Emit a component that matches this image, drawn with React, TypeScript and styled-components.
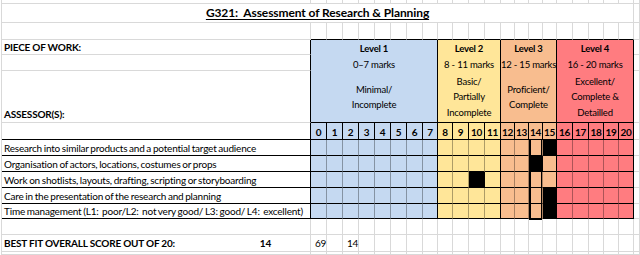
import React from "react";
import styled, { createGlobalStyle, css } from "styled-components";

const GRID = "#d9d9d9";
const INK = "#000000";
const INNER = "rgba(0, 0, 0, 0.32)";

const WIDTHS = [16, 16, 16, 16, 16, 16, 16, 15, 15, 16, 16, 16, 14, 14, 14, 14, 16, 16, 15, 15, 15];
const HEIGHTS = [4, 19, 17, 15, 16, 52, 17, 16, 16, 16, 16, 15, 16, 17];

interface Level {
  name: string;
  marks: string;
  desc: string[];
  from: number;
  to: number;
  bg: string;
}

const LEVELS: Level[] = [
  { name: "Level 1", marks: "0–7 marks", desc: ["Minimal/", "Incomplete"], from: 0, to: 7, bg: "#c5d9f1" },
  { name: "Level 2", marks: "8 - 11 marks", desc: ["Basic/", "Partially", "Incomplete"], from: 8, to: 11, bg: "#ffe699" },
  { name: "Level 3", marks: "12 - 15 marks", desc: ["Proficient/", "Complete"], from: 12, to: 15, bg: "#f8bd8f" },
  { name: "Level 4", marks: "16 - 20 marks", desc: ["Excellent/", "Complete &", "Detailled"], from: 16, to: 20, bg: "#ff7c80" },
];

const CRITERIA = [
  { text: "Research into similar products and a potential target audience", filled: [15] },
  { text: "Organisation of actors, locations, costumes or props", filled: [14] },
  { text: "Work on shotlists, layouts, drafting, scripting or storyboarding", filled: [10] },
  { text: "Care in the presentation of the research and planning", filled: [15] },
  { text: "Time management (L1:  poor/L2:  not very good/ L3: good/ L4:  excellent)", filled: [15] },
];

const MARKS = Array.from({ length: 21 }, (_, i) => i);
const levelOf = (n: number) => LEVELS.find((l) => n >= l.from && n <= l.to)!;
const isLevelEnd = (n: number) => LEVELS.some((l) => l.to === n);
const colOf = (n: number) => n + 2;
const REST = 23;

const GlobalStyle = createGlobalStyle`
  html, body {
    margin: 0;
    padding: 0;
    background: #ffffff;
  }
  body {
    font-family: Lato, "Liberation Sans", sans-serif;
    color: #000;
  }
`;

const Sheet = styled.div`
  display: grid;
  grid-template-columns: 309px ${WIDTHS.map((w) => `${w}px`).join(" ")} 1fr;
  grid-template-rows: ${HEIGHTS.map((h) => `${h}px`).join(" ")} 1fr;
  width: 639px;
  height: 255px;
  margin-left: 1px;
  border-left: 1px solid ${GRID};
  overflow: hidden;
  box-sizing: border-box;
`;

interface CellProps {
  $col: string | number;
  $row: string | number;
  $bg?: string;
  $right?: string;
  $bottom?: string;
}

const Cell = styled.div<CellProps>`
  grid-column: ${(p) => p.$col};
  grid-row: ${(p) => p.$row};
  background: ${(p) => p.$bg ?? "transparent"};
  border-right: 1px solid ${(p) => p.$right ?? GRID};
  border-bottom: 1px solid ${(p) => p.$bottom ?? GRID};
  box-sizing: border-box;
  min-width: 0;
  min-height: 0;
  font-size: 10px;
  letter-spacing: -0.2px;
  line-height: 1;
  white-space: pre;
`;

const TitleCell = styled(Cell)`
  display: flex;
  align-items: center;
  justify-content: center;
  font-size: 12px;
  font-weight: 700;
  letter-spacing: -0.1px;
  text-decoration: underline;
  text-underline-offset: 2px;
`;

const LabelCell = styled(Cell)<{ $align?: "center" | "end" }>`
  display: flex;
  align-items: ${(p) => (p.$align === "end" ? "flex-end" : "center")};
  padding: 0 0 ${(p) => (p.$align === "end" ? "3px" : "0")} 2px;
  font-weight: 700;
`;

const HeaderCell = styled(Cell)`
  display: flex;
  flex-direction: column;
  align-items: center;
  font-size: 9.5px;
`;

const HeaderTop = styled.div`
  height: 31px;
  display: flex;
  flex-direction: column;
  justify-content: center;
  align-items: center;
  gap: 7px;
  padding-top: 1px;
`;

const LevelName = styled.div`
  font-weight: 700;
`;

const HeaderDesc = styled.div`
  flex: 1;
  display: flex;
  flex-direction: column;
  justify-content: center;
  align-items: center;
  gap: 6px;
`;

const NumCell = styled(Cell)`
  display: flex;
  align-items: center;
  justify-content: center;
  font-weight: 700;
  padding-top: 1px;
`;

const MarkCell = styled(Cell)<{ $filled?: boolean; $outlined?: boolean; $last?: boolean }>`
  ${(p) =>
    p.$filled &&
    css`
      background: ${INK};
    `}
  ${(p) =>
    p.$outlined &&
    css`
      box-shadow: inset 2px 0 0 ${INK}, inset -1px 0 0 ${INK};
    `}
  ${(p) =>
    p.$outlined &&
    p.$last &&
    css`
      border-bottom-width: 2px;
      margin-bottom: -1px;
    `}
`;

const CriterionCell = styled(Cell)`
  display: flex;
  align-items: center;
  padding-left: 2px;
  word-spacing: -0.6px;
`;

const ScoreCell = styled(Cell)`
  display: flex;
  align-items: center;
  justify-content: space-between;
  padding: 0 39px 0 2px;
  font-weight: 700;
`;

const ValueCell = styled(Cell)`
  display: flex;
  align-items: center;
  padding-left: 4px;
  overflow: visible;
`;

function blanks(row: number, from: number, to: number, bottom?: string) {
  const out: React.ReactNode[] = [];
  for (let c = from; c <= to; c++) {
    out.push(<Cell key={`b-${row}-${c}`} $col={c} $row={row} $bottom={bottom} />);
  }
  return out;
}

export default function App() {
  return (
    <>
      <GlobalStyle />
      <Sheet>
        {blanks(1, 1, REST)}

        <TitleCell $col="1 / 23" $row={2}>
          {"G321:  Assessment of Research & Planning"}
        </TitleCell>
        {blanks(2, REST, REST)}

        {blanks(3, 1, 1)}
        {blanks(3, 2, 22, INK)}
        {blanks(3, REST, REST)}

        <LabelCell $col={1} $row={4} $right={INK}>
          PIECE OF WORK:
        </LabelCell>
        <Cell $col={1} $row={5} $right={INK} />
        <LabelCell $col={1} $row={6} $right={INK} $align="end">
          ASSESSOR(S):
        </LabelCell>
        {LEVELS.map((l) => (
          <HeaderCell
            key={l.name}
            $col={`${colOf(l.from)} / ${colOf(l.to) + 1}`}
            $row="4 / 7"
            $bg={l.bg}
            $right={INK}
            $bottom={INK}
          >
            <HeaderTop>
              <LevelName>{l.name}</LevelName>
              <div>{l.marks}</div>
            </HeaderTop>
            <HeaderDesc>
              {l.desc.map((d) => (
                <div key={d}>{d}</div>
              ))}
            </HeaderDesc>
          </HeaderCell>
        ))}
        {blanks(4, REST, REST)}
        {blanks(5, REST, REST)}
        {blanks(6, REST, REST)}

        <Cell $col={1} $row={7} $right={INK} $bottom={INK} />
        {MARKS.map((n) => (
          <NumCell key={`n-${n}`} $col={colOf(n)} $row={7} $bg={levelOf(n).bg} $right={INK} $bottom={INK}>
            {n}
          </NumCell>
        ))}
        {blanks(7, REST, REST)}

        {CRITERIA.map((c, i) => {
          const row = 8 + i;
          return (
            <React.Fragment key={c.text}>
              <CriterionCell $col={1} $row={row} $right={INK} $bottom={INK}>
                {c.text}
              </CriterionCell>
              {MARKS.map((n) => (
                <MarkCell
                  key={`m-${row}-${n}`}
                  $col={colOf(n)}
                  $row={row}
                  $bg={levelOf(n).bg}
                  $right={isLevelEnd(n) ? INK : INNER}
                  $bottom={INK}
                  $filled={c.filled.includes(n)}
                  $outlined={n === 14}
                  $last={i === CRITERIA.length - 1}
                />
              ))}
              {blanks(row, REST, REST)}
            </React.Fragment>
          );
        })}

        {blanks(13, 1, REST)}

        <ScoreCell $col={1} $row={14}>
          <span>BEST FIT OVERALL SCORE OUT OF 20:</span>
          <span>14</span>
        </ScoreCell>
        <ValueCell $col={2} $row={14}>69</ValueCell>
        {blanks(14, 3, 3)}
        <ValueCell $col={4} $row={14}>14</ValueCell>
        {blanks(14, 5, REST)}

        {blanks(15, 1, REST)}
      </Sheet>
    </>
  );
}
